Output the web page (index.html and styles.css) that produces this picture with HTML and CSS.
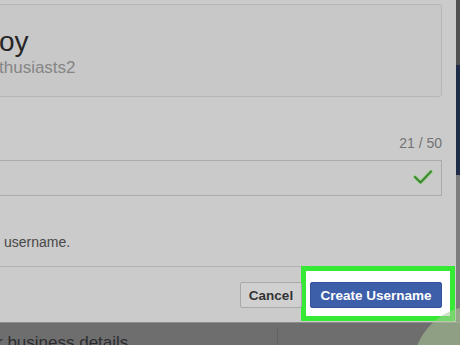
FILE: index.html
```html
<!DOCTYPE html>
<html>
<head>
<meta charset="utf-8">
<link rel="stylesheet" href="styles.css">
</head>
<body>
<div class="page">
  <div class="top">
    <div class="modal">
      <div class="card">
        <div class="name">oy</div>
        <div class="handle">thusiasts2</div>
      </div>
      <div class="count">21 / 50</div>
      <div class="field">
        <svg class="check" width="20" height="16" viewBox="0 0 20 16">
          <polyline points="2,8 7.5,13.5 18,2.5" fill="none" stroke="#8fd77a" stroke-width="4" stroke-opacity="0.55" stroke-linecap="round" stroke-linejoin="round"/>
          <polyline points="2,8 7.5,13.5 18,2.5" fill="none" stroke="#3c8a30" stroke-width="2.2" stroke-linecap="round" stroke-linejoin="round"/>
        </svg>
      </div>
      <p class="note">username.</p>
      <div class="footer">
        <button class="btn cancel">Cancel</button>
        <button class="btn create">Create Username</button>
      </div>
    </div>
    <div class="edge">
      <div class="edge-a"></div>
      <div class="edge-b"></div>
      <div class="edge-c"></div>
    </div>
  </div>
  <div class="below">
    <div class="col-left"><span class="biz">r business details</span></div>
    <div class="col-right"></div>
  </div>
  <div class="blob"></div>
</div>
</body>
</html>
```

FILE: styles.css
```css
* { box-sizing: border-box; }
html, body { margin: 0; padding: 0; }
body {
  width: 460px;
  height: 345px;
  overflow: hidden;
  font-family: "Liberation Sans", Arial, sans-serif;
  background: #6e6e6e;
}
.page { width: 460px; height: 345px; overflow: hidden; position: relative; }
.top { display: flex; height: 322px; }
.modal {
  width: 456px;
  height: 322px;
  background: #cbcbcb;
  padding: 4px 14px 0 0;
  position: relative;
  z-index: 1;
}
.card {
  margin-left: -20px;
  height: 93px;
  border: 1px solid #b6b6b6;
  border-radius: 3px;
  background: #c8c8c8;
  padding: 21px 0 0 0;
}
.name {
  margin-left: 18px;
  font-size: 28px;
  line-height: 32px;
  color: #262626;
  white-space: nowrap;
}
.handle {
  margin-left: 18px;
  font-size: 17px;
  line-height: 20px;
  color: #858585;
  white-space: nowrap;
}
.count {
  margin-top: 38px;
  text-align: right;
  font-size: 14px;
  line-height: 16px;
  color: #737373;
}
.field {
  margin-top: 9px;
  margin-left: -20px;
  height: 36px;
  border: 1px solid #ababab;
  background: #cacaca;
  display: flex;
  align-items: center;
  justify-content: flex-end;
  padding: 0 8px 3px 0;
}
.check { display: block; }
.note {
  margin: 38px 0 0 4px;
  font-size: 14px;
  line-height: 16px;
  color: #474747;
}
.footer {
  margin: 16px 0 0 -20px;
  border-top: 1px solid #b3b3b3;
  padding-top: 15px;
  display: flex;
  justify-content: flex-end;
  gap: 8px;
  position: relative;
  z-index: 0;
}
.btn {
  height: 26px;
  font-family: "Liberation Sans", Arial, sans-serif;
  font-weight: bold;
  font-size: 13.5px;
  border-radius: 2px;
  padding: 0;
  margin: 0;
}
.cancel {
  width: 62px;
  background: #d0d0d0;
  border: 1px solid #a9a9a9;
  color: #333333;
}
.create {
  width: 132px;
  background: #3d5ea9;
  border: 1px solid #34539a;
  color: #ffffff;
  position: relative;
}
.create::before {
  content: "";
  position: absolute;
  left: -10px;
  top: -17px;
  right: -14px;
  bottom: -14px;
  border: 5px solid #35e935;
  background: #ffffff;
  z-index: -1;
}
.edge { width: 4px; display: flex; flex-direction: column; }
.edge-a { height: 65px; background: #505050; }
.edge-b { height: 110px; background: #1f2c48; }
.edge-c { flex: 1; background: #7c7c7c; }
.below {
  height: 23px;
  border-top: 1px solid #8e8e8e;
  background: #6e6e6e;
  display: flex;
}
.col-left {
  width: 278px;
  border-right: 1px solid #626262;
  margin-top: 5px;
  padding-top: 5px;
  overflow: hidden;
}
.biz {
  display: block;
  margin-left: -3px;
  font-size: 17px;
  line-height: 20px;
  color: #2c2c30;
  white-space: nowrap;
}
.col-right { flex: 1; }
.blob {
  position: absolute;
  left: 413px;
  top: 306px;
  width: 124px;
  height: 124px;
  border-radius: 50%;
  background: rgba(170, 200, 150, 0.55);
  z-index: 2;
}
```
